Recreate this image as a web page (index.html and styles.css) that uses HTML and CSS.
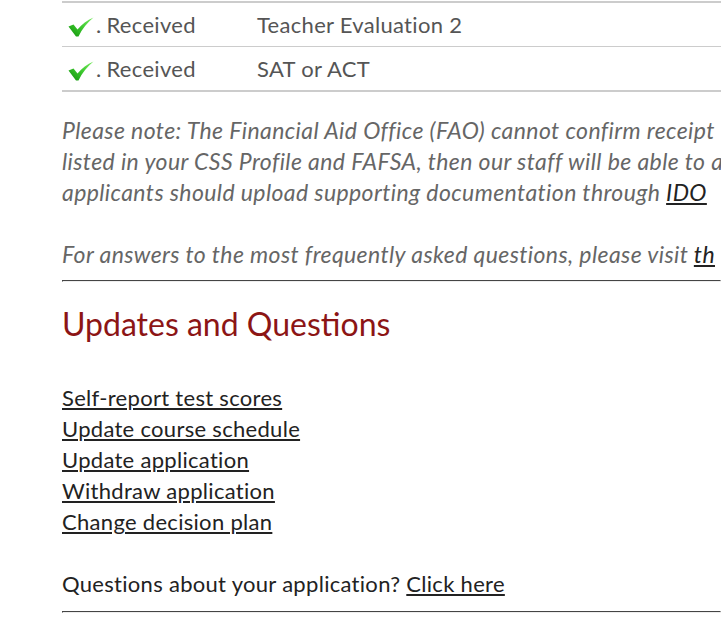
FILE: index.html
```html
<!DOCTYPE html>
<html>
<head>
<meta charset="utf-8">
<link rel="stylesheet" href="styles.css">
</head>
<body>
<div class="page">
  <table class="checklist">
    <tr>
      <td class="status"><svg class="check" width="26" height="20" viewBox="0 0 26 20"><defs><linearGradient id="g1" x1="0" y1="1" x2="1" y2="0"><stop offset="0" stop-color="#0f8f0a"/><stop offset="0.5" stop-color="#3cc82e"/><stop offset="1" stop-color="#7aeb62"/></linearGradient></defs><path d="M0.5 9.5 L5.5 7.5 L9.5 12.5 C14 7 19 3 25.5 0.5 C19.5 5.5 14 12 10.5 19.5 L8 19.5 Z" fill="url(#g1)"/></svg><span class="dot">.</span>Received</td>
      <td class="item">Teacher Evaluation 2</td>
    </tr>
    <tr>
      <td class="status"><svg class="check" width="26" height="20" viewBox="0 0 26 20"><defs><linearGradient id="g2" x1="0" y1="1" x2="1" y2="0"><stop offset="0" stop-color="#0f8f0a"/><stop offset="0.5" stop-color="#3cc82e"/><stop offset="1" stop-color="#7aeb62"/></linearGradient></defs><path d="M0.5 9.5 L5.5 7.5 L9.5 12.5 C14 7 19 3 25.5 0.5 C19.5 5.5 14 12 10.5 19.5 L8 19.5 Z" fill="url(#g2)"/></svg><span class="dot">.</span>Received</td>
      <td class="item">SAT or ACT</td>
    </tr>
  </table>

  <p class="note"><span class="line">Please note: The Financial Aid Office (FAO) cannot confirm receipt</span><span class="line">listed in your CSS Profile and FAFSA, then our staff will be able to a</span><span class="line">applicants should upload supporting documentation through <a href="#">IDO</a></span></p>
  <p class="note"><span class="line">For answers to the most frequently asked questions, please visit <a href="#">th</a></span></p>

  <hr class="rule">

  <h2 class="heading">Updates and Questions</h2>

  <ul class="links">
    <li><a href="#">Self-report test scores</a></li>
    <li><a href="#">Update course schedule</a></li>
    <li><a href="#">Update application</a></li>
    <li><a href="#">Withdraw application</a></li>
    <li><a href="#">Change decision plan</a></li>
  </ul>

  <p class="questions">Questions about your application? <a href="#">Click here</a></p>

  <hr class="rule">
</div>
</body>
</html>
```

FILE: styles.css
```css
html, body {
  margin: 0;
  padding: 0;
  background: #fff;
  overflow: hidden;
}
body {
  font-family: Lato, "Open Sans", sans-serif;
  font-size: 22px;
  line-height: 31px;
  letter-spacing: 0.3px;
  color: #222;
}
.page {
  padding-left: 62px;
  width: 659px;
}
.checklist {
  width: 100%;
  border-collapse: collapse;
  margin-top: 1px;
  border-top: 2px solid #ccc;
  border-bottom: 2px solid #ccc;
}
.checklist td {
  color: #555;
  padding: 6px 0 6px 0;
  height: 31px;
  vertical-align: middle;
  white-space: nowrap;
}
.checklist tr + tr td {
  border-top: 1px solid #ccc;
}
.status {
  width: 189px;
  padding-left: 6px !important;
}
.check {
  vertical-align: -4px;
}
.dot {
  margin: 0 5px 0 2px;
}
.note {
  margin: 23px 0 0 0;
  color: #666;
  font-style: italic;
  font-size: 23px;
  letter-spacing: 0.4px;
}
.note + .note {
  margin-top: 31px;
}
.line {
  display: block;
  white-space: nowrap;
}
a {
  color: #222;
  text-decoration: underline;
}
.rule {
  margin: 10px 0 0 0;
  border: 1px inset #eee;
  border-top-color: #999;
  border-left-color: #999;
  height: 0;
}
.heading {
  margin: 22px 0 0 0;
  font-size: 32px;
  font-weight: 400;
  letter-spacing: 0;
  line-height: 40px;
  color: #8c1515;
}
.links {
  list-style: none;
  margin: 38px 0 0 0;
  padding: 0;
}
.questions {
  margin: 31px 0 0 0;
}
.questions + .rule {
  margin-top: 12px;
}
```
